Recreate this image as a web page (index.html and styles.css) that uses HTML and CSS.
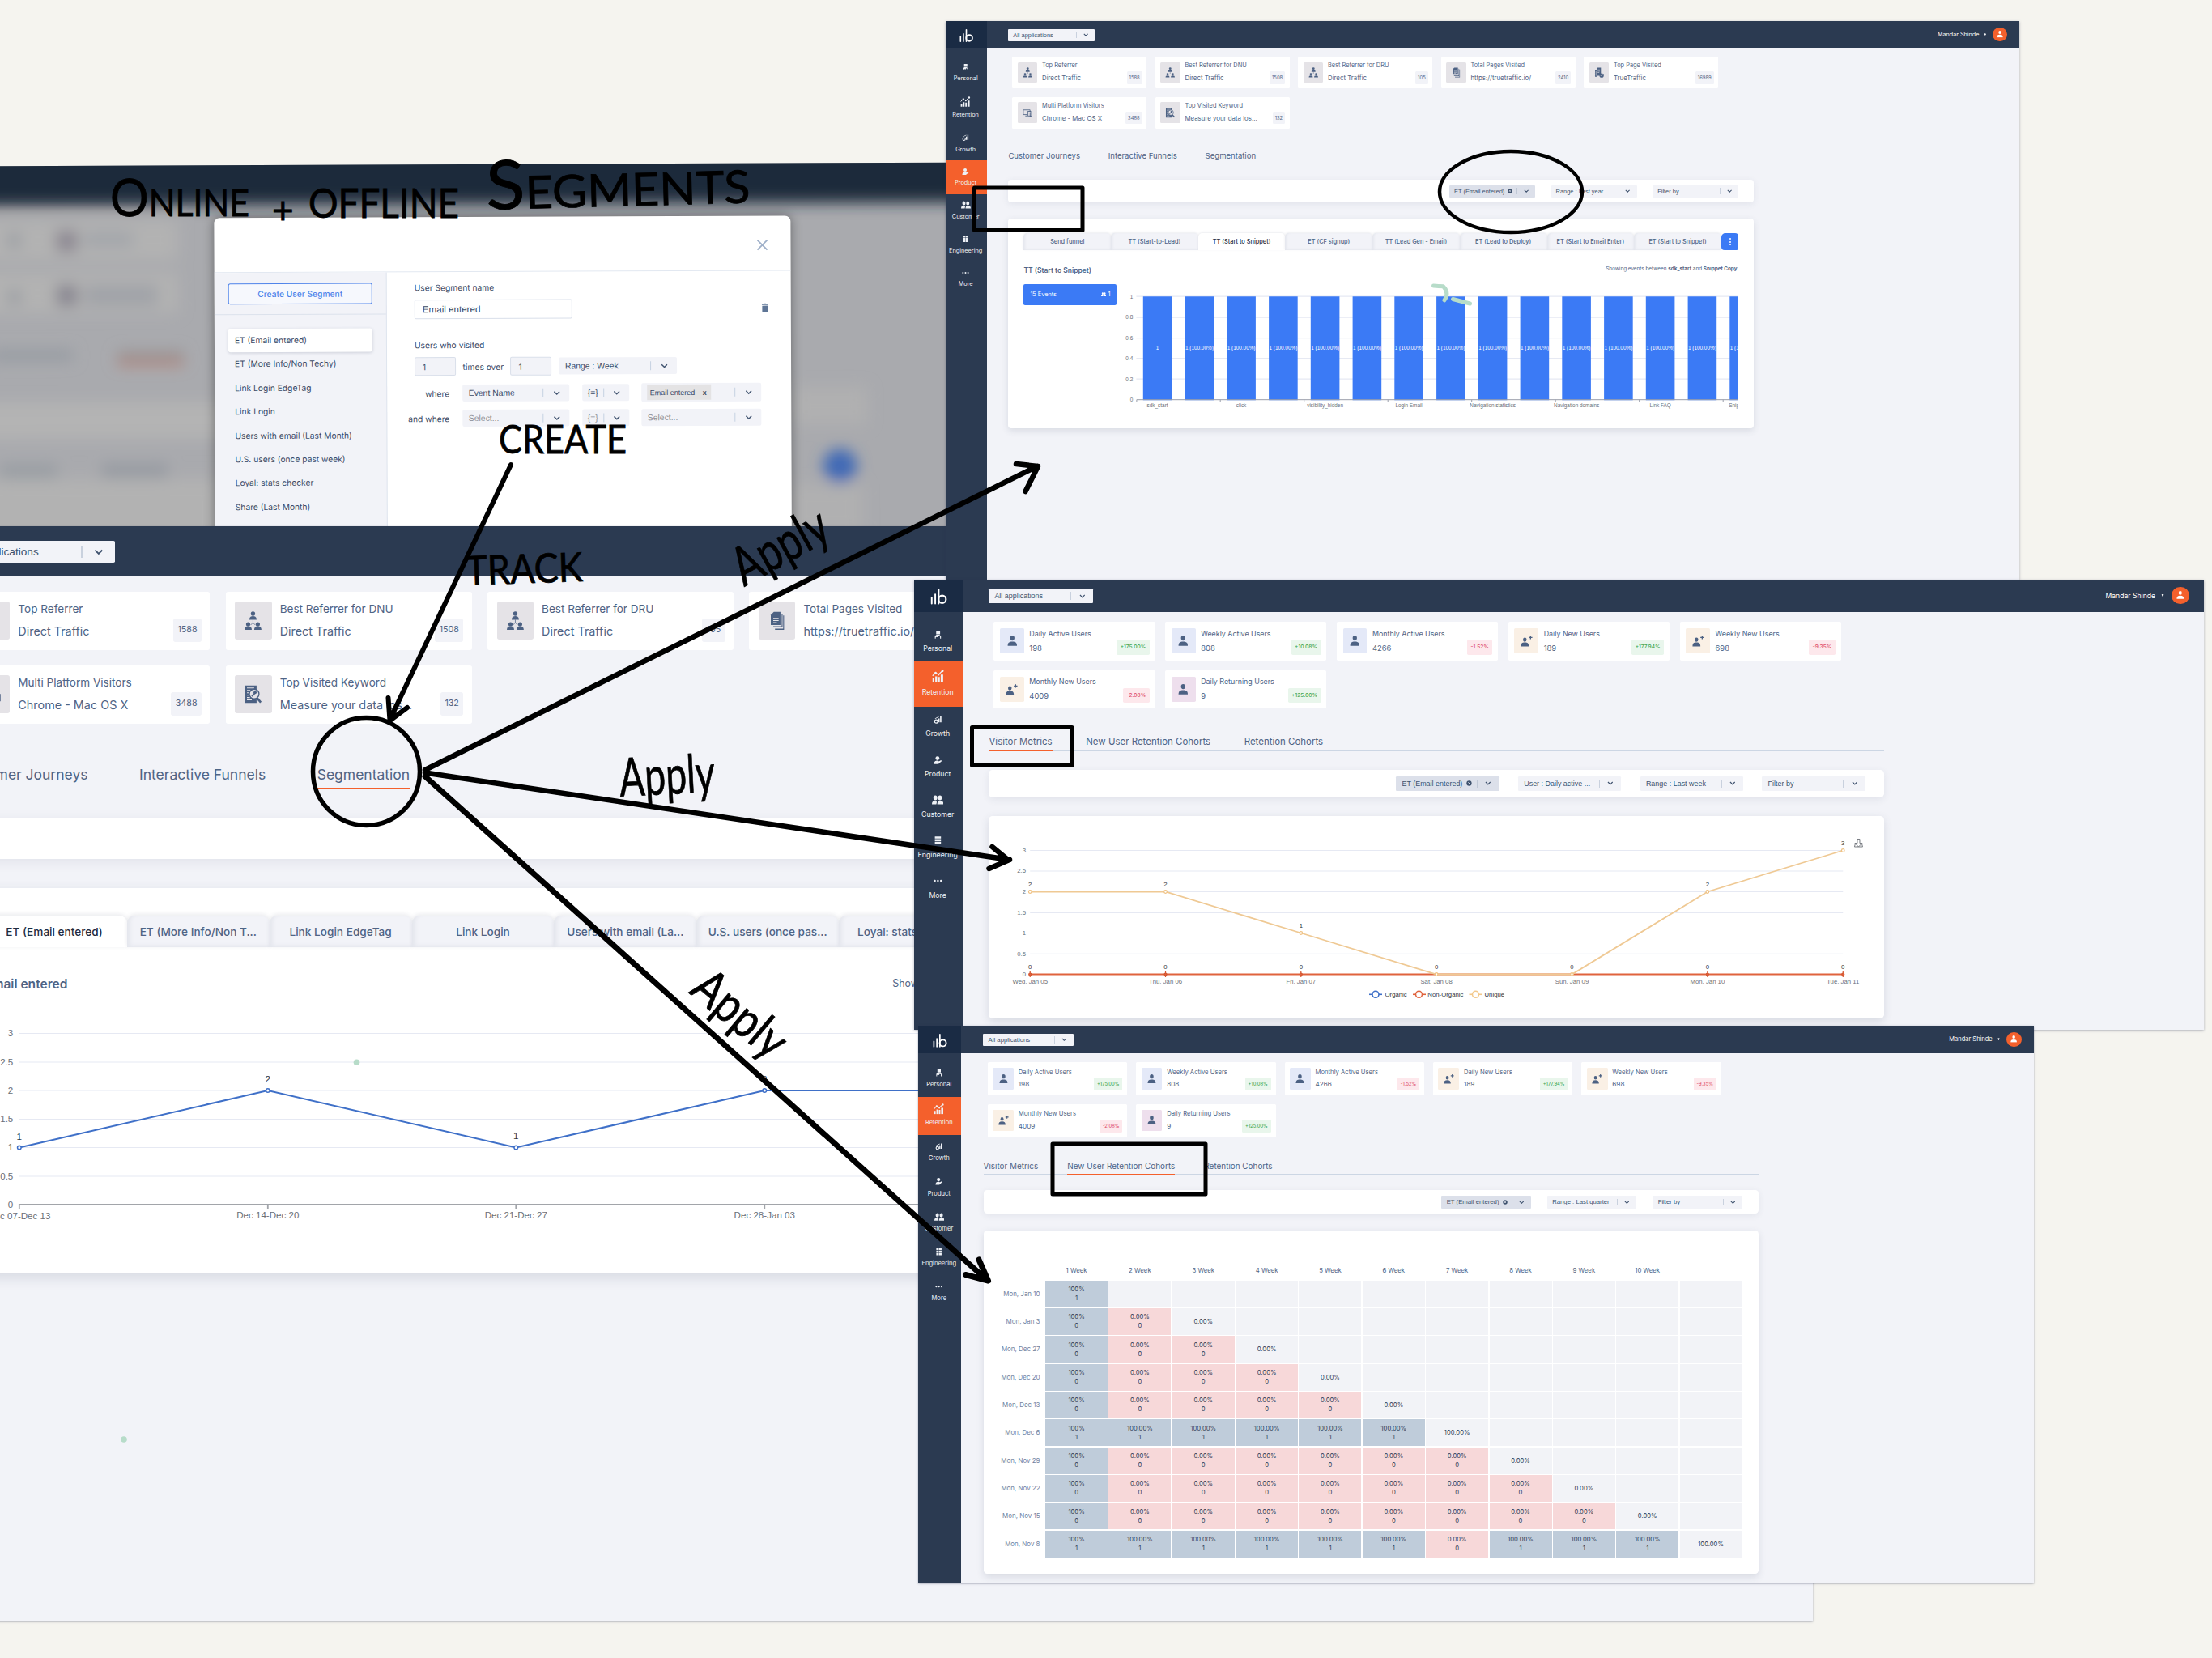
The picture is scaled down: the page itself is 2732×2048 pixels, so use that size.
FILE: index.html
```html
<!DOCTYPE html>
<html lang="en">
<head>
<meta charset="utf-8">
<title>Online + offline segments</title>
<link rel="stylesheet" href="styles.css">
</head>
<body>
<svg class="defs" aria-hidden="true">
  <symbol id="i-logo" viewBox="0 0 40 40"><path d="M4 22v14M12 15v21M20 4v32" fill="none" stroke="#fff" stroke-width="3.6" stroke-linecap="round"/><circle cx="28" cy="26.5" r="8.6" fill="none" stroke="#fff" stroke-width="4"/></symbol>
  <symbol id="i-personal" viewBox="0 0 20 20"><path d="M6 1h9v8H6zM3 19v-6l4-3h6l4 3v6h-2v-5l-3-1-2 3-3-1-2 1v3z"/></symbol>
  <symbol id="i-retention" viewBox="0 0 20 20"><path d="M1 14h3v6H1zM5.500 11h3v9h-3zM10 12h3v8h-3zM14.500 8h4v12h-4z"/><path d="M1 10l5-5 5 3 6-6" fill="none" stroke="currentColor" stroke-width="1.600"/><circle cx="6" cy="5" r="1.800"/><circle cx="11" cy="8" r="1.500"/><circle cx="17.500" cy="2" r="1.900"/></symbol>
  <symbol id="i-growth" viewBox="0 0 20 20"><path d="M3 7l9-5v2l-8 4zM11 7h3v9h-3zM15 2h3v14h-3z"/><circle cx="6" cy="14" r="3.600" fill="none" stroke="currentColor" stroke-width="2.400"/></symbol>
  <symbol id="i-product" viewBox="0 0 20 20"><circle cx="9" cy="5.500" r="4.500"/><path d="M1 19c0-6 3-8 8-8 2 0 3 1 3 2l5-3 2 2-8 7z"/></symbol>
  <symbol id="i-customer" viewBox="0 0 24 20"><ellipse cx="7" cy="6" rx="4" ry="5"/><ellipse cx="16.500" cy="6" rx="4" ry="5"/><path d="M0 19c0-5 2-7 6-7 3 0 4 1 4 3l-1 4zM11 19c0-5 2-7 6-7 5 0 7 2 7 7z"/></symbol>
  <symbol id="i-engineering" viewBox="0 0 20 20"><path d="M3 1h6.500v5H3zM10.500 1H17v5h-6.500zM3 7.200h6.500v5H3zM10.500 7.200H17v5h-6.500zM3 13.500h6.500V19H3zM10.500 13.500H17V19h-6.500z"/></symbol>
  <symbol id="i-more" viewBox="0 0 20 20"><circle cx="3" cy="10" r="2.200"/><circle cx="10" cy="10" r="2.200"/><circle cx="17" cy="10" r="2.200"/></symbol>
  <symbol id="i-org" viewBox="0 0 28 32"><circle cx="14" cy="4" r="3.600"/><path d="M8 14c0-4 2-6 6-6s6 2 6 6z"/><path d="M14 14v5M14 19l-4 4M14 19l4 4" fill="none" stroke="currentColor"/><circle cx="6" cy="21.500" r="3.500"/><path d="M0 31c0-4 2-6 6-6s6 2 6 6z"/><circle cx="22" cy="21.500" r="3.500"/><path d="M16 31c0-4 2-6 6-6s6 2 6 6z"/></symbol>
  <symbol id="i-doc" viewBox="0 0 24 32"><path d="M7 1h11v22H2V6z"/><path d="M20 4h1.500v23H6v-2h14zM22.500 7H24v24H9v-2h13.500z"/><path d="M6 12h9M6 15.500h9M6 19h6" stroke="#e5e3e7" stroke-width="1.500"/></symbol>
  <symbol id="i-doccheck" viewBox="0 0 28 32"><path d="M9 1h10v18l-4 7H7v3H1V9h5V4z"/><path d="M9 8h7M9 12h7M9 16h5M4 12v14" stroke="#e5e3e7" stroke-width="1.500"/><circle cx="21" cy="25" r="6.500"/><path d="M18 25l2 2 4-4" fill="none" stroke="#e5e3e7" stroke-width="1.500"/></symbol>
  <symbol id="i-devices" viewBox="0 0 30 28"><path d="M2 5h20v6M15 19H2V5M8 23h7" fill="none" stroke="currentColor" stroke-width="2"/><rect x="16" y="9" width="8" height="14" fill="none" stroke="currentColor" stroke-width="2"/><rect x="22" y="14" width="7" height="10" fill="none" stroke="currentColor" stroke-width="1.800"/></symbol>
  <symbol id="i-docsearch" viewBox="0 0 28 32"><path d="M1 1h19v29H1z"/><path d="M4 5h12M4 9h6M4 13h4M4 17h4M4 21h5M4 25h8" stroke="#e5e3e7" stroke-width="1.400"/><circle cx="16" cy="15" r="8" fill="#e5e3e7" stroke="currentColor" stroke-width="1.800"/><path d="M12 19l5-5" stroke="currentColor" stroke-width="2.500"/><circle cx="17.500" cy="12.500" r="2.600"/><path d="M21 22l6 7" stroke="currentColor" stroke-width="3.500"/></symbol>
  <symbol id="i-user" viewBox="0 0 28 30"><ellipse cx="14" cy="7" rx="6" ry="7"/><path d="M1 29c0-9 4-12 13-12s13 3 13 12z"/></symbol>
  <symbol id="i-userplus" viewBox="0 0 34 30"><ellipse cx="12" cy="11" rx="5" ry="6"/><path d="M1 30c0-8 3-11 11-11s11 3 11 11z"/><path d="M28 0v10M23 5h10" stroke="currentColor" stroke-width="3"/></symbol>
  <symbol id="i-chev" viewBox="0 0 12 8"><path d="M1.500 1.500L6 6l4.500-4.500" fill="none" stroke="#40536f" stroke-width="1.900"/></symbol>
  <symbol id="i-clear" viewBox="0 0 12 12"><circle cx="6" cy="6" r="5.500"/><path d="M4 4l4 4M8 4l-4 4" stroke="#dce0ea" stroke-width="1.500"/></symbol>
</svg>

<div class="board">

  <!-- segment editor -->
  <section class="studio">
    <svg class="backdrop" viewBox="0 203 1190 460">
      <g filter="url(#soft)">
        <rect x="-40" y="160" width="1270" height="92" fill="#1e2a3a"/>
        <rect x="-20" y="270" width="250" height="50" fill="#b2b2b2"/><rect x="-20" y="335" width="250" height="50" fill="#b2b2b2"/>
        <rect x="-20" y="495" width="700" height="45" fill="#b4b4b4"/><rect x="-20" y="590" width="300" height="80" fill="#b2b2b2"/>
        <rect x="80" y="283" width="26" height="26" fill="#8b8691"/><rect x="80" y="350" width="26" height="26" fill="#878590"/>
        <rect x="20" y="286" width="16" height="18" fill="#9a9da3"/><rect x="20" y="356" width="16" height="18" fill="#9a9da3"/>
        <rect x="115" y="285" width="60" height="18" fill="#a2a5aa"/><rect x="115" y="350" width="90" height="26" fill="#a0a3a8"/>
        <rect x="0" y="430" width="100" height="14" fill="#969ba2"/><rect x="155" y="432" width="82" height="14" fill="#999495"/><rect x="155" y="444" width="82" height="6" fill="#b98275"/>
        <rect x="10" y="572" width="70" height="16" fill="#979ca2"/><rect x="135" y="572" width="82" height="16" fill="#9499a0"/>
        <rect x="990" y="480" width="90" height="46" fill="#b0b0b1"/><rect x="985" y="600" width="90" height="60" fill="#b0b0b1"/>
        <circle cx="1047" cy="577" r="21" fill="#4169b6"/>
      </g>
      <filter id="soft" x="-10%" y="-20%" width="120%" height="140%"><feGaussianBlur stdDeviation="9"/></filter>
    </svg>
    <div class="modal">
      <header class="modal-top"><svg class="close" viewBox="0 0 14 14"><path d="M1 1l12 12M13 1L1 13" stroke="#9fb0c9" stroke-width="1.800"/></svg></header>
      <div class="modal-body">
        <aside class="segs">
          <div class="segs-top"><button class="create">Create User Segment</button></div>
          <ul>
            <li class="on">ET (Email entered)</li><li>ET (More Info/Non Techy)</li><li>Link Login EdgeTag</li><li>Link Login</li><li>Users with email (Last Month)</li><li>U.S. users (once past week)</li><li>Loyal: stats checker</li><li>Share (Last Month)</li>
          </ul>
        </aside>
        <div class="form">
          <label>User Segment name</label>
          <div class="line name"><div class="input full">Email entered</div><svg class="trash" viewBox="0 0 8 11"><path d="M0 1h2.500l.5-1h2l.5 1H8v1.200H0zM.6 3h6.800v7q0 1-1 1H1.600q-1 0-1-1z"/></svg></div>
          <label class="second">Users who visited</label>
          <div class="line visits"><div class="input num">1</div><span>times over</span><div class="input num">1</div><div class="pick range">Range : Week<i></i><svg><use href="#i-chev"/></svg></div></div>
          <div class="line cond"><span class="lead">where</span><div class="pick ev">Event Name<i></i><svg><use href="#i-chev"/></svg></div><div class="pick op">{=}<i></i><svg><use href="#i-chev"/></svg></div><div class="pick val tall"><em>Email entered <b>x</b></em><i></i><svg><use href="#i-chev"/></svg></div></div>
          <div class="line cond off"><span class="lead">and where</span><div class="pick ev">Select...<i></i><svg><use href="#i-chev"/></svg></div><div class="pick op">{=}<i></i><svg><use href="#i-chev"/></svg></div><div class="pick val">Select...<i></i><svg><use href="#i-chev"/></svg></div></div>
        </div>
      </div>
    </div>
  </section>

  <!-- segmentation -->
  <section class="win w-seg"><div class="app">
    <div class="logo"><svg><use href="#i-logo"/></svg></div>
    <header class="bar"><div class="select apps">All applications<i></i><svg><use href="#i-chev"/></svg></div></header>
    <nav></nav>
    <main>
      <div class="cards">
        <div class="card"><span class="ico"><svg><use href="#i-org"/></svg></span><p>Top Referrer<b>Direct Traffic</b></p><em>1588</em></div>
        <div class="card"><span class="ico"><svg><use href="#i-org"/></svg></span><p>Best Referrer for DNU<b>Direct Traffic</b></p><em>1508</em></div>
        <div class="card"><span class="ico"><svg><use href="#i-org"/></svg></span><p>Best Referrer for DRU<b>Direct Traffic</b></p><em>105</em></div>
        <div class="card"><span class="ico"><svg><use href="#i-doc"/></svg></span><p>Total Pages Visited<b>https://truetraffic.io/</b></p></div>
        <div class="card"></div>
        <div class="card"><span class="ico"><svg><use href="#i-devices"/></svg></span><p>Multi Platform Visitors<b>Chrome - Mac OS X</b></p><em>3488</em></div>
        <div class="card"><span class="ico"><svg><use href="#i-docsearch"/></svg></span><p>Top Visited Keyword<b>Measure your data los...</b></p><em>132</em></div>
      </div>
      <div class="tabs"><a>Customer Journeys</a><a>Interactive Funnels</a><a class="on">Segmentation</a></div>
      <div class="filters"></div>
      <div class="panel h-seg">
        <div class="ptabs narrow"><a class="on">ET (Email entered)</a><a>ET (More Info/Non T...</a><a>Link Login EdgeTag</a><a>Link Login</a><a>Users with email (La...</a><a>U.S. users (once pas...</a><a>Loyal: stats checker</a></div>
        <div class="phead"><h3>Email entered</h3><p class="long">Showing users</p></div>
        <svg class="chart" viewBox="-53.800 1250 1687.300 323">
          <g class="grid"><path d="M24 1276.500H1560M24 1312H1560M24 1347H1560M24 1382.500H1560M24 1417.500H1560M24 1453H1560"/></g>
          <path d="M24 1493v-5H1560M331 1488v5M637.500 1488v5M944.500 1488v5" fill="none" stroke="#a2a5aa" stroke-width="1.800"/>
          <path d="M24 1417.500L331 1347l306.500 70.500L944.500 1347H1251" fill="none" stroke="#3f70c8" stroke-width="2"/>
          <g fill="#fff" stroke="#3f70c8" stroke-width="1.500"><circle cx="24" cy="1417.500" r="2.300"/><circle cx="331" cy="1347" r="2.300"/><circle cx="637.500" cy="1417.500" r="2.300"/><circle cx="944.500" cy="1347" r="2.300"/></g>
          <g class="ax end s12"><text x="16.500" y="1280.500">3</text><text x="16.500" y="1316">2.5</text><text x="16.500" y="1351">2</text><text x="16.500" y="1386.500">1.5</text><text x="16.500" y="1421.500">1</text><text x="16.500" y="1457">0.5</text><text x="16.500" y="1492">0</text></g>
          <g class="ax mid s12"><text x="24" y="1506">Dec 07-Dec 13</text><text x="331" y="1505.500">Dec 14-Dec 20</text><text x="637.500" y="1505">Dec 21-Dec 27</text><text x="944.500" y="1505">Dec 28-Jan 03</text></g>
          <g class="ax dk mid s12"><text x="24" y="1408">1</text><text x="331" y="1337.500">2</text><text x="637.500" y="1407">1</text><text x="944.500" y="1337">2</text></g>
        </svg>
      </div>
    </main>
  </div></section>

  <!-- customer journeys -->
  <section class="win w-jour"><div class="app">
    <div class="logo"><svg><use href="#i-logo"/></svg></div>
    <header class="bar"><div class="select apps">All applications<i></i><svg><use href="#i-chev"/></svg></div><div class="who">Mandar Shinde<u></u><span><svg><use href="#i-user"/></svg></span></div></header>
    <nav><a><svg><use href="#i-personal"/></svg>Personal</a><a class="big"><svg><use href="#i-retention"/></svg>Retention</a><a><svg><use href="#i-growth"/></svg>Growth</a><a class="on"><svg><use href="#i-product"/></svg>Product</a><a><svg class="pair"><use href="#i-customer"/></svg>Customer</a><a><svg><use href="#i-engineering"/></svg>Engineering</a><a><svg><use href="#i-more"/></svg>More</a></nav>
    <main>
      <div class="cards">
        <div class="card"><span class="ico"><svg><use href="#i-org"/></svg></span><p>Top Referrer<b>Direct Traffic</b></p><em>1588</em></div>
        <div class="card"><span class="ico"><svg><use href="#i-org"/></svg></span><p>Best Referrer for DNU<b>Direct Traffic</b></p><em>1508</em></div>
        <div class="card"><span class="ico"><svg><use href="#i-org"/></svg></span><p>Best Referrer for DRU<b>Direct Traffic</b></p><em>105</em></div>
        <div class="card"><span class="ico"><svg><use href="#i-doc"/></svg></span><p>Total Pages Visited<b>https://truetraffic.io/</b></p><em>2410</em></div>
        <div class="card"><span class="ico"><svg><use href="#i-doccheck"/></svg></span><p>Top Page Visited<b>TrueTraffic</b></p><em>16989</em></div>
        <div class="card"><span class="ico"><svg><use href="#i-devices"/></svg></span><p>Multi Platform Visitors<b>Chrome - Mac OS X</b></p><em>3488</em></div>
        <div class="card"><span class="ico"><svg><use href="#i-docsearch"/></svg></span><p>Top Visited Keyword<b>Measure your data los...</b></p><em>132</em></div>
      </div>
      <div class="tabs"><a class="on">Customer Journeys</a><a>Interactive Funnels</a><a>Segmentation</a></div>
      <div class="filters"><div class="select hot">ET (Email entered)<svg class="clr"><use href="#i-clear"/></svg><i></i><svg><use href="#i-chev"/></svg></div><div class="select">Range : Last year<i></i><svg><use href="#i-chev"/></svg></div><div class="select">Filter by<i></i><svg><use href="#i-chev"/></svg></div></div>
      <div class="panel h-jour">
        <div class="ptabs"><a>Send funnel</a><a>TT (Start-to-Lead)</a><a class="on">TT (Start to Snippet)</a><a>ET (CF signup)</a><a>TT (Lead Gen - Email)</a><a>ET (Lead to Deploy)</a><a>ET (Start to Email Enter)</a><a>ET (Start to Snippet)</a><button><s></s><s></s><s></s></button></div>
        <div class="phead"><h3>TT (Start to Snippet)</h3><p>Showing events between <strong>sdk_start</strong> and <strong>Snippet Copy</strong>.</p></div>
        <div class="funnel">
          <div class="events"><span>15 Events</span><span><svg><use href="#i-customer"/></svg> 1</span></div>
          <svg class="chart" viewBox="1384.600 350.800 763 160">
            <g class="grid"><path d="M1404 366H2148M1404 392H2148M1404 417.500H2148M1404 442.500H2148M1404 468H2148"/></g>
            <g fill="#3b7af5"><path d="M1412.400 366h35.600v128h-35.600zM1464.200 366h35.600v128h-35.600zM1515.900 366h35.600v128h-35.600zM1567.700 366h35.600v128h-35.600zM1619.400 366h35.600v128h-35.600zM1671.200 366h35.600v128h-35.600zM1722.900 366h35.600v128h-35.600zM1774.700 366h35.600v128h-35.600zM1826.400 366h35.600v128h-35.600zM1878.200 366h35.600v128h-35.600zM1929.900 366h35.600v128h-35.600zM1981.700 366h35.600v128h-35.600zM2033.400 366h35.600v128h-35.600zM2085.200 366h35.600v128h-35.600zM2136.900 366h35.600v128h-35.600z"/></g>
            <path d="M1404.500 496v-2.500H2148M1507.800 493.500v3M1611.300 493.500v3M1714.800 493.500v3M1818.300 493.500v3M1921.800 493.500v3M2025.300 493.500v3M2128.800 493.500v3" fill="none" stroke="#9a9eab" stroke-width="1"/>
            <g class="ax end s6"><text x="1399.800" y="368.500">1</text><text x="1399.800" y="394.300">0.8</text><text x="1399.800" y="420">0.6</text><text x="1399.800" y="445">0.4</text><text x="1399.800" y="470.500">0.2</text><text x="1399.800" y="495.500">0</text></g>
            <g class="ax mid s6"><text x="1430.200" y="503">sdk_start</text><text x="1533.700" y="503">click</text><text x="1637.200" y="503">visibility_hidden</text><text x="1740.700" y="503">Login Email</text><text x="1844.200" y="503">Navigation statistics</text><text x="1947.700" y="503">Navigation domains</text><text x="2051.200" y="503">Link FAQ</text><text x="2155" y="503">Snippet Copy</text></g>
            <g class="ax wh mid s6"><text x="1430.200" y="432">1</text><text x="1482" y="432">1 (100.00%)</text><text x="1533.700" y="432">1 (100.00%)</text><text x="1585.500" y="432">1 (100.00%)</text><text x="1637.200" y="432">1 (100.00%)</text><text x="1689" y="432">1 (100.00%)</text><text x="1740.700" y="432">1 (100.00%)</text><text x="1792.500" y="432">1 (100.00%)</text><text x="1844.200" y="432">1 (100.00%)</text><text x="1896" y="432">1 (100.00%)</text><text x="1947.700" y="432">1 (100.00%)</text><text x="1999.500" y="432">1 (100.00%)</text><text x="2051.200" y="432">1 (100.00%)</text><text x="2103" y="432">1 (100.00%)</text><text x="2154.700" y="432">1 (100.00%)</text></g>
          </svg>
        </div>
      </div>
    </main>
  </div></section>

  <!-- visitor metrics -->
  <section class="win w-visit"><div class="app">
    <div class="logo"><svg><use href="#i-logo"/></svg></div>
    <header class="bar"><div class="select apps">All applications<i></i><svg><use href="#i-chev"/></svg></div><div class="who">Mandar Shinde<u></u><span><svg><use href="#i-user"/></svg></span></div></header>
    <nav><a><svg><use href="#i-personal"/></svg>Personal</a><a class="big on"><svg><use href="#i-retention"/></svg>Retention</a><a><svg><use href="#i-growth"/></svg>Growth</a><a><svg><use href="#i-product"/></svg>Product</a><a><svg class="pair"><use href="#i-customer"/></svg>Customer</a><a><svg><use href="#i-engineering"/></svg>Engineering</a><a><svg><use href="#i-more"/></svg>More</a></nav>
    <main>
      <div class="cards">
        <div class="card"><span class="ico act"><svg><use href="#i-user"/></svg></span><p>Daily Active Users<b>198</b></p><em class="up">+175.00%</em></div>
        <div class="card"><span class="ico act"><svg><use href="#i-user"/></svg></span><p>Weekly Active Users<b>808</b></p><em class="up">+10.08%</em></div>
        <div class="card"><span class="ico act"><svg><use href="#i-user"/></svg></span><p>Monthly Active Users<b>4266</b></p><em class="down">-1.52%</em></div>
        <div class="card"><span class="ico new"><svg><use href="#i-userplus"/></svg></span><p>Daily New Users<b>189</b></p><em class="up">+177.94%</em></div>
        <div class="card"><span class="ico new"><svg><use href="#i-userplus"/></svg></span><p>Weekly New Users<b>698</b></p><em class="down">-9.35%</em></div>
        <div class="card"><span class="ico new"><svg><use href="#i-userplus"/></svg></span><p>Monthly New Users<b>4009</b></p><em class="down">-2.08%</em></div>
        <div class="card"><span class="ico ret"><svg><use href="#i-user"/></svg></span><p>Daily Returning Users<b>9</b></p><em class="up">+125.00%</em></div>
      </div>
      <div class="tabs"><a class="on">Visitor Metrics</a><a>New User Retention Cohorts</a><a>Retention Cohorts</a></div>
      <div class="filters"><div class="select hot">ET (Email entered)<svg class="clr"><use href="#i-clear"/></svg><i></i><svg><use href="#i-chev"/></svg></div><div class="select">User : Daily active ...<i></i><svg><use href="#i-chev"/></svg></div><div class="select">Range : Last week<i></i><svg><use href="#i-chev"/></svg></div><div class="select">Filter by<i></i><svg><use href="#i-chev"/></svg></div></div>
      <div class="panel h-visit">
        <svg class="chart" viewBox="1221.500 1008 1105.200 250">
          <g class="grid"><path d="M1272.700 1050.500H2276.800M1272.700 1076H2276.800M1272.700 1101.500H2276.800M1272.700 1127.300H2276.800M1272.700 1152.500H2276.800M1272.700 1178.300H2276.800"/></g>
          <path d="M1272.700 1203.500H2276.800" stroke="#e0633d" stroke-width="2"/>
          <g stroke="#d4552f" stroke-width="1.200" fill="#e0633d"><path d="M1272.700 1200v7M1440 1200v7M1607.300 1200v7M2109.400 1200v7M2276.800 1200v7"/><circle cx="1272.700" cy="1203.500" r="1.500"/><circle cx="1440" cy="1203.500" r="1.500"/><circle cx="1607.300" cy="1203.500" r="1.500"/><circle cx="2109.400" cy="1203.500" r="1.500"/><circle cx="2276.800" cy="1203.500" r="1.500"/></g>
          <path d="M1272.700 1101.500H1440L1607.300 1152.500 1774.600 1203.500H1942L2109.400 1101.500 2276.800 1050.500" fill="none" stroke="#efc994" stroke-width="1.800"/>
          <g fill="#fff" stroke="#efc080" stroke-width="1.200"><circle cx="1272.700" cy="1101.500" r="1.800"/><circle cx="1440" cy="1101.500" r="1.800"/><circle cx="1607.300" cy="1152.500" r="1.800"/><circle cx="1774.600" cy="1203.500" r="1.800"/><circle cx="1942" cy="1203.500" r="1.800"/><circle cx="2109.400" cy="1101.500" r="1.800"/><circle cx="2276.800" cy="1050.500" r="1.800"/></g>
          <g class="ax end s8"><text x="1267.500" y="1053">3</text><text x="1267.500" y="1078.500">2.5</text><text x="1267.500" y="1104">2</text><text x="1267.500" y="1130">1.5</text><text x="1267.500" y="1155">1</text><text x="1267.500" y="1181">0.5</text><text x="1267.500" y="1206">0</text></g>
          <g class="ax mid s8"><text x="1272.700" y="1215">Wed, Jan 05</text><text x="1440" y="1215">Thu, Jan 06</text><text x="1607.300" y="1215">Fri, Jan 07</text><text x="1774.600" y="1215">Sat, Jan 08</text><text x="1942" y="1215">Sun, Jan 09</text><text x="2109.400" y="1215">Mon, Jan 10</text><text x="2276.800" y="1215">Tue, Jan 11</text></g>
          <g class="ax dk mid s8"><text x="1272.700" y="1095">2</text><text x="1440" y="1095">2</text><text x="1607.300" y="1146">1</text><text x="2109.400" y="1095.500">2</text><text x="2276.800" y="1044">3</text><text x="1272.700" y="1197">0</text><text x="1440" y="1197">0</text><text x="1607.300" y="1197">0</text><text x="1774.600" y="1197.500">0</text><text x="1942" y="1197.500">0</text><text x="2109.400" y="1197.500">0</text><text x="2276.800" y="1197.500">0</text></g>
          <g class="ax dk s8"><text x="1711" y="1231">Organic</text><text x="1763.800" y="1231">Non-Organic</text><text x="1834" y="1231">Unique</text></g>
          <g fill="#fff" stroke-width="1.600"><g stroke="#3f70c8"><path d="M1691.500 1228.300h16"/><circle cx="1699.500" cy="1228.300" r="4"/></g><g stroke="#e0633d"><path d="M1745.500 1228.300h16"/><circle cx="1753" cy="1228.300" r="4"/></g><g stroke="#f3c98c"><path d="M1815 1228.300h16"/><circle cx="1823" cy="1228.300" r="4"/></g></g>
          <path d="M2294.500 1036.500h3v5h3l-4.500 4.500-4.500-4.500h3zM2292 1042l-1 4h10l-1-4" fill="none" stroke="#777b82" stroke-width="1"/>
        </svg>
      </div>
    </main>
  </div></section>

  <!-- retention cohorts -->
  <section class="win w-coh"><div class="app">
    <div class="logo"><svg><use href="#i-logo"/></svg></div>
    <header class="bar"><div class="select apps">All applications<i></i><svg><use href="#i-chev"/></svg></div><div class="who">Mandar Shinde<u></u><span><svg><use href="#i-user"/></svg></span></div></header>
    <nav><a><svg><use href="#i-personal"/></svg>Personal</a><a class="big on"><svg><use href="#i-retention"/></svg>Retention</a><a><svg><use href="#i-growth"/></svg>Growth</a><a><svg><use href="#i-product"/></svg>Product</a><a><svg class="pair"><use href="#i-customer"/></svg>Customer</a><a><svg><use href="#i-engineering"/></svg>Engineering</a><a><svg><use href="#i-more"/></svg>More</a></nav>
    <main>
      <div class="cards">
        <div class="card"><span class="ico act"><svg><use href="#i-user"/></svg></span><p>Daily Active Users<b>198</b></p><em class="up">+175.00%</em></div>
        <div class="card"><span class="ico act"><svg><use href="#i-user"/></svg></span><p>Weekly Active Users<b>808</b></p><em class="up">+10.08%</em></div>
        <div class="card"><span class="ico act"><svg><use href="#i-user"/></svg></span><p>Monthly Active Users<b>4266</b></p><em class="down">-1.52%</em></div>
        <div class="card"><span class="ico new"><svg><use href="#i-userplus"/></svg></span><p>Daily New Users<b>189</b></p><em class="up">+177.94%</em></div>
        <div class="card"><span class="ico new"><svg><use href="#i-userplus"/></svg></span><p>Weekly New Users<b>698</b></p><em class="down">-9.35%</em></div>
        <div class="card"><span class="ico new"><svg><use href="#i-userplus"/></svg></span><p>Monthly New Users<b>4009</b></p><em class="down">-2.08%</em></div>
        <div class="card"><span class="ico ret"><svg><use href="#i-user"/></svg></span><p>Daily Returning Users<b>9</b></p><em class="up">+125.00%</em></div>
      </div>
      <div class="tabs"><a>Visitor Metrics</a><a class="on">New User Retention Cohorts</a><a>Retention Cohorts</a></div>
      <div class="filters"><div class="select hot">ET (Email entered)<svg class="clr"><use href="#i-clear"/></svg><i></i><svg><use href="#i-chev"/></svg></div><div class="select">Range : Last quarter<i></i><svg><use href="#i-chev"/></svg></div><div class="select">Filter by<i></i><svg><use href="#i-chev"/></svg></div></div>
      <div class="panel h-coh">
        <div class="cohorts">
          <span></span><span class="wk">1 Week</span><span class="wk">2 Week</span><span class="wk">3 Week</span><span class="wk">4 Week</span><span class="wk">5 Week</span><span class="wk">6 Week</span><span class="wk">7 Week</span><span class="wk">8 Week</span><span class="wk">9 Week</span><span class="wk">10 Week</span><span></span>
          <span class="day">Mon, Jan 10</span><q class="b">100%<br>1</q><q></q><q></q><q></q><q></q><q></q><q></q><q></q><q></q><q></q><q></q>
          <span class="day">Mon, Jan 3</span><q class="b">100%<br>0</q><q class="r">0.00%<br>0</q><q>0.00%</q><q></q><q></q><q></q><q></q><q></q><q></q><q></q><q></q>
          <span class="day">Mon, Dec 27</span><q class="b">100%<br>0</q><q class="r">0.00%<br>0</q><q class="r">0.00%<br>0</q><q>0.00%</q><q></q><q></q><q></q><q></q><q></q><q></q><q></q>
          <span class="day">Mon, Dec 20</span><q class="b">100%<br>0</q><q class="r">0.00%<br>0</q><q class="r">0.00%<br>0</q><q class="r">0.00%<br>0</q><q>0.00%</q><q></q><q></q><q></q><q></q><q></q><q></q>
          <span class="day">Mon, Dec 13</span><q class="b">100%<br>0</q><q class="r">0.00%<br>0</q><q class="r">0.00%<br>0</q><q class="r">0.00%<br>0</q><q class="r">0.00%<br>0</q><q>0.00%</q><q></q><q></q><q></q><q></q><q></q>
          <span class="day">Mon, Dec 6</span><q class="b">100%<br>1</q><q class="b">100.00%<br>1</q><q class="b">100.00%<br>1</q><q class="b">100.00%<br>1</q><q class="b">100.00%<br>1</q><q class="b">100.00%<br>1</q><q>100.00%</q><q></q><q></q><q></q><q></q>
          <span class="day">Mon, Nov 29</span><q class="b">100%<br>0</q><q class="r">0.00%<br>0</q><q class="r">0.00%<br>0</q><q class="r">0.00%<br>0</q><q class="r">0.00%<br>0</q><q class="r">0.00%<br>0</q><q class="r">0.00%<br>0</q><q>0.00%</q><q></q><q></q><q></q>
          <span class="day">Mon, Nov 22</span><q class="b">100%<br>0</q><q class="r">0.00%<br>0</q><q class="r">0.00%<br>0</q><q class="r">0.00%<br>0</q><q class="r">0.00%<br>0</q><q class="r">0.00%<br>0</q><q class="r">0.00%<br>0</q><q class="r">0.00%<br>0</q><q>0.00%</q><q></q><q></q>
          <span class="day">Mon, Nov 15</span><q class="b">100%<br>0</q><q class="r">0.00%<br>0</q><q class="r">0.00%<br>0</q><q class="r">0.00%<br>0</q><q class="r">0.00%<br>0</q><q class="r">0.00%<br>0</q><q class="r">0.00%<br>0</q><q class="r">0.00%<br>0</q><q class="r">0.00%<br>0</q><q>0.00%</q><q></q>
          <span class="day">Mon, Nov 8</span><q class="b">100%<br>1</q><q class="b">100.00%<br>1</q><q class="b">100.00%<br>1</q><q class="b">100.00%<br>1</q><q class="b">100.00%<br>1</q><q class="b">100.00%<br>1</q><q class="r">0.00%<br>0</q><q class="b">100.00%<br>1</q><q class="b">100.00%<br>1</q><q class="b">100.00%<br>1</q><q>100.00%</q>
        </div>
      </div>
    </main>
  </div></section>

  <!-- notes drawn over the screens -->
  <svg class="ink" viewBox="0 0 2732 2048">
    <g fill="none" stroke="#000" stroke-width="6" stroke-linecap="round" stroke-linejoin="round">
      <path d="M631 574L481.500 889M479.500 862l2 28 21.500-16"/>
      <path d="M525 951L1281 576M1255 573l27 3-15.500 31" stroke-width="6.500"/>
      <path d="M525 954.500L1247 1062M1225.500 1046l20 16.500-24 10.500" stroke-width="6.500"/>
      <path d="M525 959L1220 1582M1209 1556l11.500 26-28-7.500" stroke-width="7"/>
      <ellipse cx="452.500" cy="953" rx="66" ry="66.500" stroke-width="5.500"/>
      <ellipse cx="1866" cy="237" rx="88" ry="50" stroke-width="4.500"/>
      <rect x="1203.500" y="232" width="133.500" height="52.500" stroke-width="5"/>
      <rect x="1200.500" y="898.500" width="123.500" height="47" stroke-width="5"/>
      <rect x="1300" y="1413" width="189" height="62" stroke-width="5"/>
      <path d="M1770.500 353l12 .8q8 8 1.500 17M1794.500 369.500l21 5.500" stroke="#b7dcc9" stroke-width="5"/>
    </g>
    <g fill="#b7dcc9"><circle cx="440.500" cy="1312.300" r="3.800"/><circle cx="153" cy="1778" r="3.800"/></g>
    <g class="hand">
      <text x="136" y="267" font-size="46" textLength="172" lengthAdjust="spacingAndGlyphs"><tspan font-size="64">O</tspan>NLINE</text>
      <text x="336" y="276" font-size="46">+</text>
      <text x="381" y="269" font-size="50" textLength="186" lengthAdjust="spacingAndGlyphs">OFFLINE</text>
      <text x="601" y="259" font-size="56" textLength="326" lengthAdjust="spacingAndGlyphs" transform="rotate(-1.500 601 259)"><tspan font-size="84">S</tspan>EGMENTS</text>
      <text x="616" y="560" font-size="48" textLength="158" lengthAdjust="spacingAndGlyphs">CREATE</text>
      <text x="576" y="723" font-size="50" textLength="144" lengthAdjust="spacingAndGlyphs" transform="rotate(-2 576 723)">TRACK</text>
      <text x="919" y="725" font-size="66" textLength="126" lengthAdjust="spacingAndGlyphs" transform="rotate(-29 919 725)">Apply</text>
      <text x="766" y="984" font-size="66" textLength="118" lengthAdjust="spacingAndGlyphs" transform="rotate(-3 766 984)">Apply</text>
      <text x="850" y="1226" font-size="62" textLength="132" lengthAdjust="spacingAndGlyphs" transform="rotate(40 850 1226)">Apply</text>
    </g>
  </svg>
</div>
</body>
</html>
```
FILE: styles.css
```css
* { box-sizing: border-box; }
body { margin: 0; background: #f5f4ef; font-family: Inter, "Liberation Sans", sans-serif; color: #4f6485; }
p, h3, ul { margin: 0; padding: 0; }
ul { list-style: none; }
i, em { font-style: normal; }
button { font: inherit; border: 0; padding: 0; }
.defs { display: none; }
.board { position: relative; width: 2732px; height: 2048px; overflow: hidden; }
.ink { position: absolute; left: 0; top: 0; width: 2732px; height: 2048px; }
.hand { font-family: Lato, Inter, sans-serif; font-weight: 400; fill: #000; stroke: #000; stroke-width: .8; }

/* ---- screens on the board ---- */
.win { position: absolute; background: #f2f3f8; box-shadow: 0 1px 3px rgba(40, 50, 80, .35); overflow: hidden; }
.app { display: grid; grid-template: 33.4px 1fr / 50.7px 1fr; height: 100%; }
.w-seg { left: -195.600px; top: 650px; width: 2435px; height: 1352px; }
.w-seg .app { zoom: 1.832; }
.w-jour { left: 1168px; top: 26px; width: 1326px; height: 690px; }
.w-visit { left: 1128.600px; top: 715.500px; width: 1593px; height: 556px; }
.w-visit .app { zoom: 1.2; }
.w-coh { left: 1134.200px; top: 1266.500px; width: 1378px; height: 688px; }
.w-coh .app { zoom: 1.039; }

.logo { background: #1a2b44; display: flex; align-items: center; justify-content: center; }
.logo svg { width: 19px; height: 18px; margin-top: 2px; }
.bar { background: #2b3a51; padding: 0 15px 0 26.500px; display: flex; align-items: center; justify-content: space-between; }
.who { display: flex; align-items: center; color: #fff; font-size: 7.200px; }
.who u { width: 3px; height: 3px; background: #fff; border-radius: 50%; margin: 0 8px 0 6px; clip-path: polygon(0 0, 100% 0, 50% 100%); }
.who span { width: 17.600px; height: 17.600px; border-radius: 50%; background: #f4602c; display: flex; align-items: center; justify-content: center; }
.who svg { width: 8px; height: 8.500px; fill: #fff; }

.select { width: 106px; height: 14.800px; background: #f2f3f8; border-radius: 1px; padding: 0 6px; display: flex; align-items: center; font: 7.450px "Liberation Sans", sans-serif; color: #40536f; white-space: nowrap; }
.select i { width: .8px; height: 8.500px; background: #c9d1de; margin-left: auto; margin-right: 7.800px; }
.select svg { width: 6.400px; height: 4.300px; margin-right: 1.800px; }
.select .clr { width: 5.800px; height: 5.800px; margin: 0 0 0 4px; fill: #40536f; }
.select.hot { background: #dce0ea; }
.select.hot i { background: #c0c8d6; }
.select.apps { width: 107px; margin-top: 1px; }

nav { background: #2b3a51; padding-top: 9.900px; }
nav a { display: flex; flex-direction: column; align-items: center; gap: 4.600px; height: 41.600px; padding: 8.400px 1.400px 0 0; font-size: 7.300px; line-height: 10px; color: #eef1f6; }
nav a svg { width: 9px; height: 10px; fill: currentColor; flex: none; }
nav a svg.pair { width: 12px; }
nav a.big { height: 46px; }
nav a.big svg { width: 12.500px; height: 13px; }
nav a.on { background: #f4602c; }

main { padding: 10.600px 0 0 26.700px; width: 948px; }
.cards { display: grid; grid-template-columns: repeat(5, 166px); grid-auto-rows: 39.500px; gap: 10.200px 10.500px; margin-left: 5px; }
.card { background: #fff; border-radius: 1.500px; display: flex; padding: 0 5.700px 0 6.300px; white-space: nowrap; }
.ico { width: 24.800px; height: 25.600px; margin-top: 6.800px; border-radius: 1.500px; background: #e5e3e7; display: flex; align-items: center; justify-content: center; color: #4c6183; flex: none; }
.ico svg { width: 12.500px; height: 13px; fill: currentColor; }
.ico.act { background: #e4e9f8; }
.ico.new { background: #faf0e5; }
.ico.ret { background: #eedfed; }
.ico.act svg, .ico.ret svg { width: 10.500px; height: 11px; }
.card p { margin: 4.500px 0 0 5.500px; font-size: 7.400px; line-height: 14.900px; }
.card b { display: block; font-weight: 400; font-size: 7.850px; }
.card em { margin: 18.300px 0 0 auto; height: 15.500px; line-height: 15.500px; padding: 0 3px; background: #f2f3f8; border-radius: 1.500px; font-size: 5.850px; }
.card em.up { background: #e9f6ec; color: #43a853; font-weight: 500; font-size: 5.500px; padding: 0 3.800px; }
.card em.down { background: #fde8ec; color: #e0506a; font-weight: 500; font-size: 5.500px; padding: 0 3.800px; }

.tabs { display: flex; gap: 34.700px; height: 20.200px; margin-top: 23.900px; border-bottom: 1px solid #ccd6e4; font-size: 9.550px; line-height: 20.600px; white-space: nowrap; width: 921px; }
.tabs .on { height: 20.200px; border-bottom: 1.600px solid #f4602c; }
.filters { width: 921px; height: 28px; margin-top: 19px; background: #fff; border-radius: 4px; box-shadow: 0 2px 8px rgba(60, 70, 100, .09); display: flex; align-items: center; justify-content: flex-end; gap: 19.600px; padding-right: 19.200px; }
.panel { width: 921px; margin-top: 19.500px; background: #fff; border-radius: 4px; box-shadow: 0 3px 9px rgba(60, 70, 100, .14); overflow: hidden; }
.h-jour { height: 258.800px; }
.h-seg { height: 259.800px; }
.h-visit { height: 208.600px; }
.h-coh { height: 408px; }

.ptabs { display: flex; margin: 18.300px 19px 0; height: 21.300px; font-size: 7.350px; font-weight: 500; white-space: nowrap; }
.ptabs a { width: 107.700px; flex: none; display: flex; align-items: center; justify-content: center; padding-bottom: 1px; background: #f2f3f8; border-radius: 5px 5px 0 0; box-shadow: 0 -1px 3px rgba(60, 70, 100, .1), inset 2px -1px 3px rgba(60, 70, 100, .07); }
.ptabs a.on { background: #fff; color: #1f2c42; box-shadow: 0 -1px 3px rgba(60, 70, 100, .1); }
.ptabs.narrow { margin-top: 19px; }
.ptabs.narrow a { width: 96px; font-size: 7.450px; padding-bottom: 0; }
.ptabs.narrow a.on { padding-right: 2px; }
.ptabs button { width: 21.600px; background: #3b7af5; border-radius: 5px 4px 2px 4px; display: flex; flex-direction: column; gap: 1.500px; align-items: center; justify-content: center; }
.ptabs s { width: 2px; height: 2px; border-radius: 50%; background: #fff; }
.phead { display: flex; justify-content: space-between; height: 41.900px; padding: 18.700px 19px 0; line-height: 12px; }
.phead h3 { font-size: 8.500px; font-weight: 600; white-space: nowrap; }
.phead p { font-size: 6.350px; line-height: 8px; }
.phead .long { width: 271px; font-size: 6.800px; line-height: 10.500px; }
.h-seg .phead { height: 43.200px; }
.funnel { display: grid; grid-template-columns: 115px 1fr; gap: 5px; padding: 0 19px; }
.events { height: 25.300px; background: #3b7af5; border-radius: 2px; color: #fff; font-size: 7.300px; display: flex; justify-content: space-between; align-items: center; padding: 0 8px; }
.events svg { width: 6.500px; height: 5.500px; fill: #fff; }
.chart { display: block; width: 100%; font-family: "Liberation Sans", sans-serif; }
.grid path { stroke: #e6e9f3; stroke-width: 1.200; }
.ax { fill: #6c7078; }
.dk { fill: #33363c; }
.wh { fill: #fff; }
.mid { text-anchor: middle; }
.end { text-anchor: end; }
.s6 { font-size: 6.400px; }
.s8 { font-size: 7.800px; }
.s12 { font-size: 11.600px; }

.cohorts { display: grid; grid-template-columns: 72.300px repeat(11, 1fr); grid-template-rows: 20px repeat(10, 31.750px); gap: 1.300px; padding: 19px 19.200px 0 0; margin-top: 19.300px; font-size: 7.350px; text-align: center; line-height: 10.600px; }
.cohorts .wk { font-size: 7.500px; padding-top: 4px; }
.cohorts .day { align-self: center; text-align: right; padding-right: 5px; font-size: 7.650px; color: #71839f; }
.cohorts q { quotes: none; background: #f2f3f7; color: #2f3e58; display: block; align-content: center; }
.cohorts q.b { background: #bfccda; }
.cohorts q.r { background: #f7d8d9; }

/* ---- segment editor ---- */
.studio { position: absolute; left: -10px; top: 203px; width: 1190px; height: 460px; background: #a9aaae; transform: rotate(-.22deg); overflow: hidden; font-size: 10.250px; color: #3a4a66; }
.backdrop { position: absolute; left: 0; top: 0; width: 1190px; height: 460px; }
.modal { position: relative; width: 712px; height: 400px; margin: 65px 0 0 275px; background: #fff; border-radius: 7px 7px 0 0; box-shadow: 0 0 14px rgba(0, 0, 0, .4); overflow: hidden; }
.modal-top { height: 68px; border-bottom: 1.500px solid #e2e8f1; display: flex; justify-content: flex-end; padding: 29px 28px 0 0; }
.close { width: 14px; height: 14px; }
.modal-body { display: flex; height: 332px; }
.segs { width: 213px; background: #f2f3f8; border-right: 1px solid #dfe5ee; }
.segs-top { height: 52px; padding: 12.500px 17px 0; border-bottom: 1px solid #dce2ec; }
.create { display: block; width: 178px; height: 26.500px; border: 1.400px solid #4f84ea; border-radius: 2.500px; background: #f6f8fd; color: #4f84ea; font-weight: 500; }
.segs ul { padding: 17px 17px 0; }
.segs li { height: 29.400px; line-height: 29.400px; padding-left: 8px; white-space: nowrap; }
.segs li.on { background: #fff; border-radius: 3px; width: 178px; box-shadow: 0 1px 4px rgba(60, 70, 100, .22); }
.form { flex: 1; padding: 13px 37px 0 34px; }
.form label { display: block; height: 12px; line-height: 12px; }
.form label.second { margin-top: 26px; }
.line { display: flex; align-items: center; }
.name { margin-top: 8.500px; justify-content: space-between; margin-right: -9px; align-items: flex-start; }
.input { border: 1px solid #d9dfea; border-radius: 2px; font: 11.600px "Liberation Sans", sans-serif; display: flex; align-items: center; padding-left: 9px; }
.full { width: 195px; height: 24.500px; }
.trash { width: 8px; height: 11px; fill: #5e7596; margin: 6px 0 0; }
.visits { margin-top: 8.500px; height: 24px; gap: 8.500px; }
.num { width: 51px; height: 23.500px; background: #f2f3f8; font: 10px Inter, sans-serif; }
.pick { background: #f2f3f8; border-radius: 2px; height: 20.500px; display: flex; align-items: center; padding: 0 11px 0 8px; font: 10.400px "Liberation Sans", sans-serif; }
.pick i { width: 1px; height: 11px; background: #c6d2e2; margin: 0 12px 0 auto; }
.pick svg { width: 9px; height: 6px; }
.pick em { background: #e4e3e4; height: 19.500px; display: flex; align-items: center; padding: 0 5px 0 4px; margin-left: -1px; font-size: 9px; width: 79px; justify-content: space-between; }
.range { width: 146px; }
.cond { margin: 7px 0 0 -13px; height: 24px; }
.off { color: #8b8e96; }
.lead { width: 56px; text-align: right; margin-right: 15.500px; color: #3a4a66; white-space: nowrap; }
.visits + .cond { margin-top: 9px; }
.ev { width: 132px; margin-right: 16px; }
.op { width: 58px; margin-right: 15px; padding-left: 7px; }
.op i { margin-right: 11px; }
.val { width: 148px; }
.tall { height: 23.500px; }
```
